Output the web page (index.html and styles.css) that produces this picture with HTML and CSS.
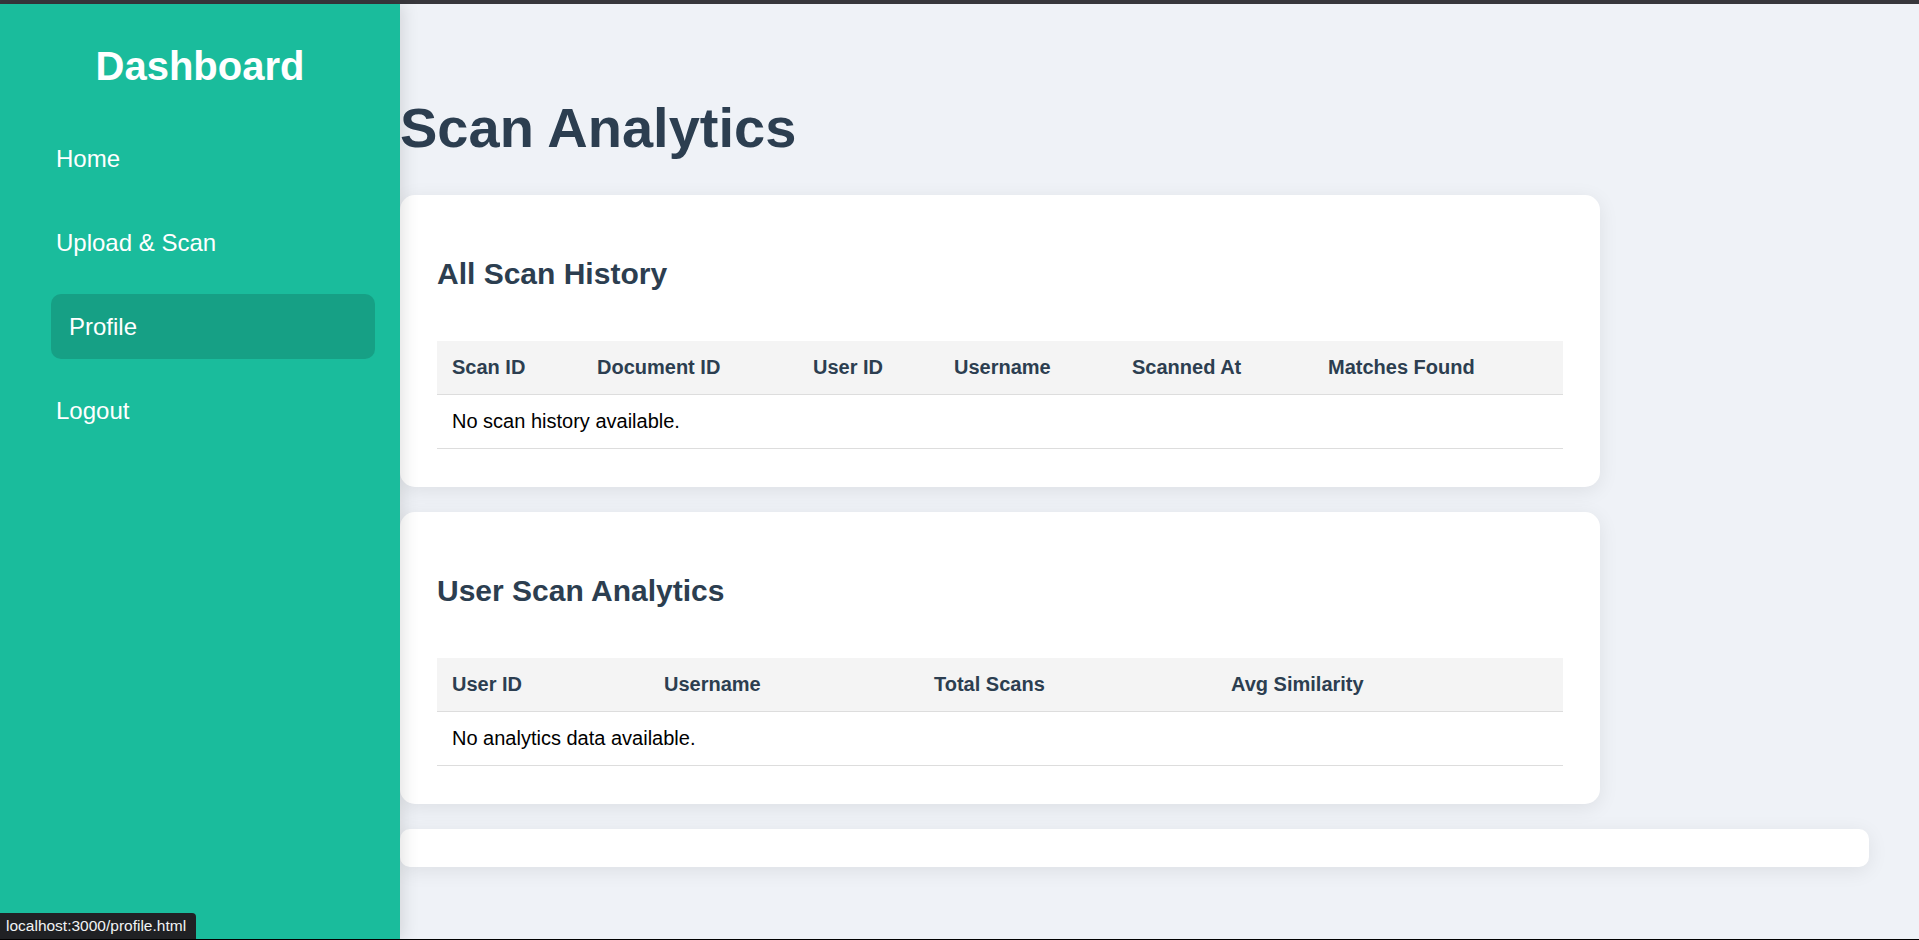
FILE: index.html
```html
<!DOCTYPE html>
<html lang="en">
<head>
<meta charset="utf-8">
<title>Scan Analytics</title>
<link rel="stylesheet" href="styles.css">
</head>
<body>
<div class="topbar"></div>
<div class="layout">
  <aside class="sidebar">
    <h2 class="brand">Dashboard</h2>
    <nav class="nav">
      <a class="nav-link" href="#">Home</a>
      <a class="nav-link" href="#">Upload &amp; Scan</a>
      <a class="nav-link active" href="#">Profile</a>
      <a class="nav-link" href="#">Logout</a>
    </nav>
  </aside>
  <main class="main">
    <h1 class="page-title">Scan Analytics</h1>
    <section class="card">
      <h2 class="card-title">All Scan History</h2>
      <table class="data-table history">
        <thead>
          <tr>
            <th>Scan ID</th>
            <th>Document ID</th>
            <th>User ID</th>
            <th>Username</th>
            <th>Scanned At</th>
            <th>Matches Found</th>
          </tr>
        </thead>
        <tbody>
          <tr><td colspan="6">No scan history available.</td></tr>
        </tbody>
      </table>
    </section>
    <section class="card">
      <h2 class="card-title">User Scan Analytics</h2>
      <table class="data-table analytics">
        <thead>
          <tr>
            <th>User ID</th>
            <th>Username</th>
            <th>Total Scans</th>
            <th>Avg Similarity</th>
          </tr>
        </thead>
        <tbody>
          <tr><td colspan="4">No analytics data available.</td></tr>
        </tbody>
      </table>
    </section>
    <div class="panel"></div>
  </main>
</div>
<div class="status">localhost:3000/profile.html</div>
<div class="bottom-line"></div>
</body>
</html>
```

FILE: styles.css
```css
* { box-sizing: border-box; }

html, body {
  margin: 0;
  padding: 0;
  height: 100%;
}

body {
  font-family: "Liberation Sans", Arial, sans-serif;
  background: #eff2f7;
  overflow: hidden;
}

.topbar {
  height: 4px;
  background: #37373c;
}

.layout {
  display: flex;
  min-height: calc(100vh - 4px);
}

.sidebar {
  width: 400px;
  flex: 0 0 400px;
  background: #1abc9c;
  padding-top: 39px;
  position: relative;
  z-index: 2;
  box-shadow: 3px 0 16px rgba(0, 0, 0, 0.12);
}

.brand {
  margin: 0 0 37px;
  font-size: 40px;
  line-height: 46px;
  font-weight: bold;
  text-align: center;
  color: #ffffff;
}

.nav {
  display: flex;
  flex-direction: column;
  gap: 19px;
}

.nav-link {
  display: block;
  margin-left: 51px;
  width: 324px;
  padding: 19px 5px;
  font-size: 24px;
  line-height: 27px;
  color: #ffffff;
  text-decoration: none;
  border-radius: 10px;
}

.nav-link.active {
  background: #16a085;
  padding-left: 18px;
}

.main {
  flex: 1;
  padding: 92px 50px 0 0;
}

.page-title {
  margin: 0 0 35px;
  font-size: 56px;
  line-height: 64px;
  font-weight: bold;
  color: #2c3e50;
}

.card {
  width: 1200px;
  background: #ffffff;
  border-radius: 15px;
  padding: 37px 37px 38px;
  margin-bottom: 25px;
  box-shadow: 0 4px 20px rgba(0, 0, 0, 0.08);
}

.card-title {
  margin: 25px 0 50px;
  font-size: 30px;
  line-height: 34px;
  font-weight: bold;
  color: #2c3e50;
}

.data-table {
  width: 100%;
  border-collapse: collapse;
  table-layout: fixed;
  font-size: 20px;
  line-height: 23px;
}

.data-table th,
.data-table td {
  padding: 15px;
  text-align: left;
  border-bottom: 1px solid #dddddd;
}

.data-table th {
  background: #f4f4f4;
  color: #2c3e50;
  font-weight: bold;
}

.data-table td {
  color: #000000;
}

.history th:nth-child(1) { width: 145px; }
.history th:nth-child(2) { width: 216px; }
.history th:nth-child(3) { width: 141px; }
.history th:nth-child(4) { width: 178px; }
.history th:nth-child(5) { width: 196px; }
.history th:nth-child(6) { width: 250px; }

.analytics th:nth-child(1) { width: 212px; }
.analytics th:nth-child(2) { width: 270px; }
.analytics th:nth-child(3) { width: 297px; }
.analytics th:nth-child(4) { width: 347px; }

.panel {
  height: 38px;
  background: #ffffff;
  border-radius: 10px;
  box-shadow: 0 4px 20px rgba(0, 0, 0, 0.08);
}

.status {
  position: fixed;
  left: 0;
  bottom: 1px;
  height: 26px;
  padding: 0 10px 0 6px;
  background: #202124;
  color: #f1f3f4;
  font-size: 15.5px;
  line-height: 26px;
  border-top-right-radius: 4px;
  z-index: 5;
}

.bottom-line {
  position: fixed;
  left: 0;
  right: 0;
  bottom: 0;
  height: 1px;
  background: #000000;
  z-index: 6;
}
```
